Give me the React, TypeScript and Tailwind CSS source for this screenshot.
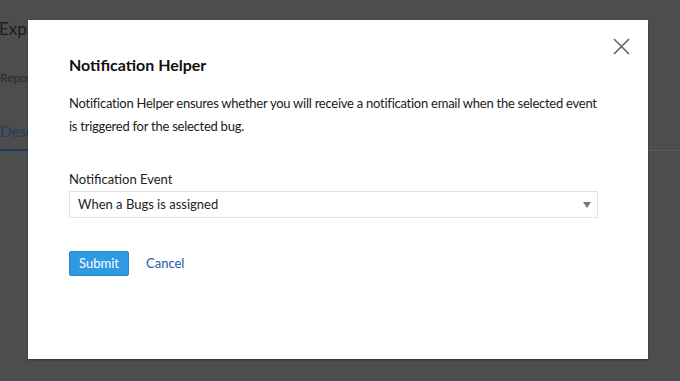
import React from "react";

export default function App() {
  return (
    <div
      className="relative w-[680px] h-[381px] overflow-hidden bg-[#4d4d4d]"
      style={{ fontFamily: "Lato, 'Open Sans', sans-serif" }}
    >
      {/* background page (dimmed) */}
      <div className="flex flex-col">
        <div className="h-[20px]" />
        <div className="text-[17px] leading-[18px] text-[#1c1c1c] -ml-[1px] whitespace-nowrap">Expand Issue</div>
        <div className="mt-[33px] text-[12px] leading-[14px] text-[#2a2a2a] whitespace-nowrap">Reporter</div>
        <div className="mt-[37px] flex items-end">
          <div className="border-b-2 border-[#1c3a5f] pb-[9px] pr-[10px] text-[15px] leading-[18px] text-[#1f3d63] whitespace-nowrap">
            Description
          </div>
          <div className="flex-1 border-b border-[#5a5a5a]" />
        </div>
      </div>

      {/* modal */}
      <div className="absolute left-[28px] top-[20px] w-[620px] h-[339px] bg-white shadow-[0_1px_2px_rgba(0,0,0,0.35)]">
        <button className="absolute right-[18px] top-[17px] w-[18px] h-[18px] flex items-center justify-center">
          <svg width="17" height="17" viewBox="0 0 17 17">
            <path d="M1 1 L16 16 M16 1 L1 16" stroke="#666" strokeWidth="1.6" fill="none" />
          </svg>
        </button>
        <div className="pl-[41px] pr-[30px] pt-[34px] flex flex-col">
          <h2 className="text-[16px] leading-[22px] font-bold text-[#111]">Notification Helper</h2>
          <p className="mt-[16px] text-[13px] leading-[23px] text-[#1a1a1a] tracking-[-0.25px] w-[560px]">
            Notification Helper ensures whether you will receive a notification email when the selected event
            <br />
            is triggered for the selected bug.
          </p>
          <label className="mt-[32px] text-[13px] leading-[18px] text-[#222]">Notification Event</label>
          <div className="mt-[3px] w-[529px] h-[27px] border border-[#e3e3e3] flex items-center justify-between pl-[8px] pr-[6px]">
            <span className="text-[13px] text-[#222]">When a Bugs is assigned</span>
            <svg width="8" height="6" viewBox="0 0 8 6">
              <path d="M0 0 L8 0 L4 6 Z" fill="#777" />
            </svg>
          </div>
          <div className="mt-[33px] flex items-center gap-[17px]">
            <button className="w-[60px] h-[25px] rounded-[2px] bg-[#2f9ae3] border border-[#2488cf] text-white text-[13px] flex items-center justify-center">
              Submit
            </button>
            <span className="text-[13px] text-[#1b5aa6]">Cancel</span>
          </div>
        </div>
      </div>
    </div>
  );
}
